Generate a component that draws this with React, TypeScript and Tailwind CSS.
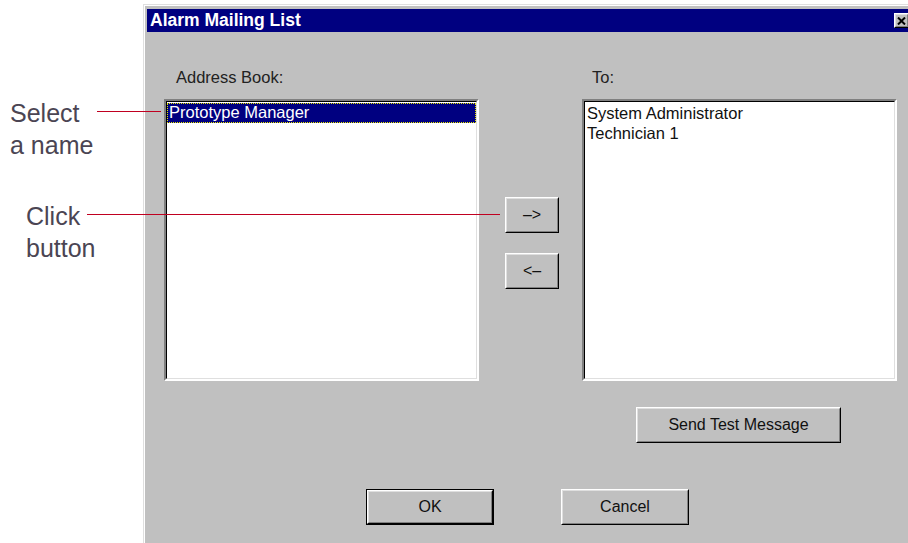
import React from 'react';

const sunken =
  'border-2 border-t-[#808080] border-l-[#808080] border-b-white border-r-white';

const Win95Button: React.FC<{
  label: React.ReactNode;
  className?: string;
  isDefault?: boolean;
}> = ({ label, className = '', isDefault = false }) => (
  <div className={`${isDefault ? 'border border-black' : ''} ${className} flex`}>
    <div className="flex-1 flex border border-t-white border-l-white border-b-black border-r-black">
      <div className="flex-1 flex items-center justify-center border border-t-[#dfdfdf] border-l-[#dfdfdf] border-b-[#808080] border-r-[#808080] bg-[#c0c0c0] text-[16px] text-[#111]">
        {label}
      </div>
    </div>
  </div>
);

const ListBox: React.FC<{ items: string[]; selected?: number }> = ({ items, selected }) => (
  <div className={`w-[315px] h-[282px] ${sunken}`}>
    <div className="h-full border border-t-black border-l-black border-b-[#dfdfdf] border-r-[#dfdfdf] bg-white pt-[1px]">
      {items.map((item, i) => (
        <div
          key={item}
          className={
            i === selected
              ? 'h-[20px] leading-[18px] px-[2px] bg-[#000080] text-white outline outline-1 outline-dotted outline-[#e8e800] -outline-offset-1'
              : 'h-[20px] leading-[20px] px-[2px] text-[#111]'
          }
        >
          {item}
        </div>
      ))}
    </div>
  </div>
);

const CloseGlyph: React.FC = () => (
  <svg width="9" height="8" viewBox="0 0 9 8">
    <path d="M1 0.5 L8 7.5 M8 0.5 L1 7.5" stroke="black" strokeWidth="2" />
  </svg>
);

const App: React.FC = () => {
  return (
    <div
      className="relative w-[908px] h-[543px] overflow-hidden bg-white flex"
      style={{ fontFamily: '"Liberation Sans", Arial, sans-serif' }}
    >
      {/* callout labels */}
      <div className="w-[143px] shrink-0 pt-[97px] text-[25px] leading-[32px] text-[#4b4553]">
        <div className="pl-[10px]">
          Select
          <br />
          a name
        </div>
        <div className="pl-[26px] mt-[39px]">
          Click
          <br />
          button
        </div>
      </div>

      {/* dialog */}
      <div className="mt-[4px] w-[780px] shrink-0 border-l border-t border-[#dfdfdf]">
        <div className="h-full border-l border-t border-white bg-[#c0c0c0] pl-[2px] pt-[3px]">
          <div className="h-[23px] bg-[#000080] flex items-center justify-between pl-[3px] pr-[14px]">
            <span className="text-white font-bold text-[17.5px] leading-none">Alarm Mailing List</span>
            <Win95Button className="w-[15px] h-[15px]" label={<CloseGlyph />} />
          </div>

          <div className="pl-[17px] pt-[35px] text-[16.5px]">
            <div className="flex h-[20px] items-center text-[#222]">
              <span className="pl-[12px] w-[428px]">Address Book:</span>
              <span>To:</span>
            </div>

            <div className="flex mt-[12px]">
              <ListBox items={['Prototype Manager']} selected={0} />
              <div className="w-[103px] flex flex-col items-center pt-[98px] gap-[20px]">
                <Win95Button className="w-[54px] h-[36px] ml-[3px]" label="–>" />
                <Win95Button className="w-[54px] h-[36px] ml-[3px]" label="<–" />
              </div>
              <ListBox items={['System Administrator', 'Technician 1']} />
            </div>

            <div className="flex mt-[26px] pl-[472px]">
              <Win95Button className="w-[205px] h-[36px]" label="Send Test Message" />
            </div>

            <div className="flex mt-[46px] pl-[202px] gap-[67px]">
              <Win95Button isDefault className="w-[128px] h-[36px]" label="OK" />
              <Win95Button className="w-[128px] h-[36px]" label="Cancel" />
            </div>
          </div>
        </div>
      </div>

      {/* callout leader lines */}
      <div className="absolute left-[97px] top-[111px] w-[64px] h-[1px] bg-[#c00020]" />
      <div className="absolute left-[87px] top-[214px] w-[413px] h-[1px] bg-[#c00020]" />
    </div>
  );
};

export default App;
